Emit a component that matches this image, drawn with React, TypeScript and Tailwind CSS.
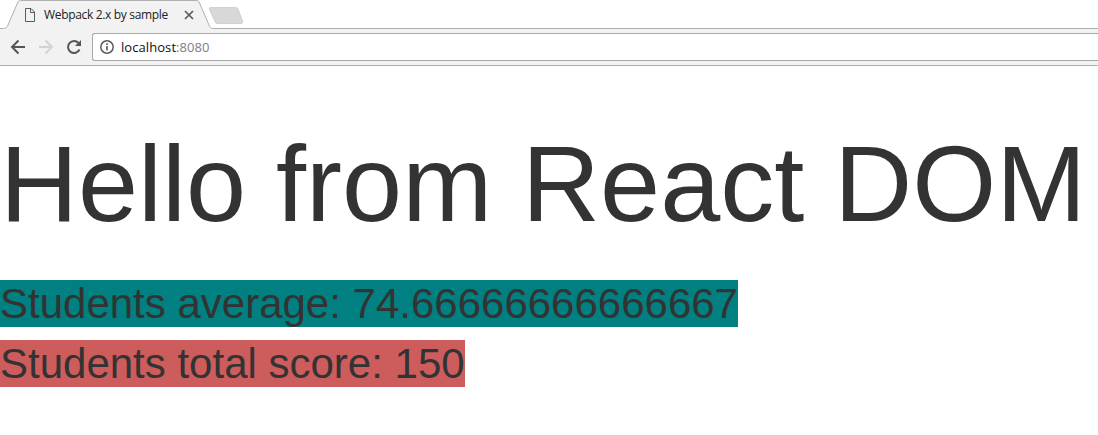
function TabStrip() {
  return (
    <div className="relative flex h-[29px] w-full items-start">
      <svg className="absolute left-0 top-0" width="1098" height="29" viewBox="0 0 1098 29" fill="none">
        <path d="M5 29C7 28 7.5 26.500 8.500 24L17.500 3C18.200 1.200 18.800 0.500 20.500 0.500H196C198 0.500 198.700 1.200 199.500 3L208.500 24C209.500 26.500 210 28 212 29Z" fill="#f2f2f2" />
        <path d="M0 28.500H3.500C6 28.500 7 27.500 8 25L17.500 3C18.200 1.200 18.800 0.500 20.500 0.500H196C198 0.500 198.700 1.200 199.500 3L209 25C210 27.500 210.500 28.500 213 28.500H1098" stroke="#b0b0b0" />
        <path d="M211 7.500H235.500C237 7.500 237.500 8 238 9L242.500 21C243 22.500 242.500 23.500 241 23.500H218C216.500 23.500 215.500 23 215 21.500L209.500 9.500C209 8.200 209.500 7.500 211 7.500Z" fill="#d8d8d8" stroke="#d0d0d0" />
      </svg>
      <div className="relative flex h-[29px] w-[200px] items-center pl-[25px] pt-px">
        <svg className="shrink-0" width="10" height="14" viewBox="0 0 10 14" fill="none" stroke="#5a5a5a">
          <path d="M0.500 0.500H6L9.500 4V13.500H0.500ZM5.500 0.500V4.500H9.500" />
        </svg>
        <span className="ml-[9px] w-[125px] whitespace-nowrap font-['Open_Sans',sans-serif] text-[12px] leading-[16px] tracking-[-0.33px] text-[#222]">Webpack 2.x by sample</span>
        <svg className="ml-[15px] shrink-0" width="10" height="10" viewBox="0 0 10 10" stroke="#5a5a5a" strokeWidth="1.700">
          <path d="M1 1L9 9M9 1L1 9" />
        </svg>
      </div>
    </div>
  );
}

function Toolbar() {
  return (
    <div className="flex h-[37px] w-full items-start border-b border-[#b0b0b0] bg-[#f2f2f2] pt-[4px]">
      <div className="flex h-[28px] w-[92px] shrink-0 items-center gap-[12px] pl-[10px]">
        <svg width="16" height="16" viewBox="0 0 16 16" fill="none" stroke="#555" strokeWidth="2">
          <path d="M15 8H2.500M8.500 1.500L2 8L8.500 14.500" />
        </svg>
        <svg width="16" height="16" viewBox="0 0 16 16" fill="none" stroke="#d3d3d3" strokeWidth="2">
          <path d="M1 8H13.500M7.500 1.500L14 8L7.500 14.500" />
        </svg>
        <svg width="16" height="16" viewBox="0 0 16 16" fill="none">
          <path d="M13.500 10.500A6 6 0 1 1 12.500 4" stroke="#555" strokeWidth="2" />
          <path d="M15 1V7H9Z" fill="#555" />
        </svg>
      </div>
      <div className="flex h-[28px] flex-1 items-center rounded-l-[3px] border border-r-0 border-[#a8a8a8] bg-white pl-[7px]">
        <svg className="shrink-0" width="14" height="14" viewBox="0 0 14 14" fill="none">
          <circle cx="7" cy="7" r="6.200" stroke="#5a5a5a" strokeWidth="1.500" />
          <path d="M7 6V10.500M7 3.300V5" stroke="#5a5a5a" strokeWidth="1.600" />
        </svg>
        <span className="ml-[7px] whitespace-nowrap font-['Open_Sans',sans-serif] text-[13px] leading-[18px] tracking-[0.07px] text-[#111]">
          localhost<span className="text-[#808080]">:8080</span>
        </span>
      </div>
    </div>
  );
}

export default function App() {
  return (
    <div className="h-[435px] w-full overflow-hidden bg-white font-['Liberation_Sans',Arial,sans-serif] text-[#333]">
      <TabStrip />
      <Toolbar />
      <main>
        <h1 className="mt-[58px] whitespace-nowrap text-[108px] font-normal leading-[119px]">Hello from React DOM</h1>
        <div className="mt-[37px] flex flex-col items-start gap-[13px] whitespace-nowrap text-[42px] leading-[47px]">
          <div className="h-[47px] bg-[#008080]">Students average: 74.66666666666667</div>
          <div className="h-[47px] bg-[#cd5c5c]">Students total score: 150</div>
        </div>
      </main>
    </div>
  );
}
